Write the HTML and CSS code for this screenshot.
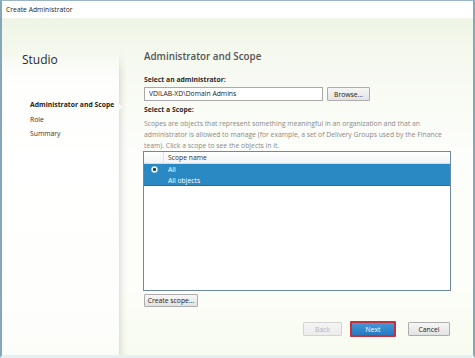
FILE: index.html
```html
<!DOCTYPE html>
<html lang="en">
<head>
    <meta charset="UTF-8">
    <meta name="viewport" content="width=device-width, initial-scale=1.0">
    <title>Create Administrator</title>
    <link rel="stylesheet" href="styles.css">
</head>
<body>
    <div class="window">
        <div class="titlebar">Create Administrator</div>

        <div class="window-body">
            <aside class="sidebar">
                <div class="studio">Studio</div>
                <ul class="steps">
                    <li class="active">Administrator and Scope</li>
                    <li>Role</li>
                    <li>Summary</li>
                </ul>
            </aside>
            <div class="divider"><span class="pointer"></span></div>

            <main class="page">
                <h1>Administrator and Scope</h1>

                <div class="field-label">Select an administrator:</div>
                <div class="admin-row">
                    <div class="textbox">VDILAB-XD\Domain Admins</div>
                    <button class="btn browse">Browse...</button>
                </div>

                <div class="field-label">Select a Scope:</div>
                <p class="desc">Scopes are objects that represent something meaningful in an organization and that an administrator is allowed to manage (for example, a set of Delivery Groups used by the Finance team). Click a scope to see the objects in it.</p>

                <div class="scope-table">
                    <div class="scope-head">
                        <div class="col-radio"></div>
                        <div class="col-name">Scope name</div>
                    </div>
                    <div class="scope-row selected">
                        <div class="col-radio"><span class="radio"></span></div>
                        <div class="col-name">
                            <div>All</div>
                            <div>All objects</div>
                        </div>
                    </div>
                </div>

                <button class="btn create">Create scope...</button>

                <div class="footer">
                    <button class="btn back" disabled>Back</button>
                    <button class="btn primary">Next</button>
                    <button class="btn cancel">Cancel</button>
                </div>
            </main>
        </div>
    </div>
</body>
</html>
```

FILE: styles.css
```css
* {
    box-sizing: border-box;
}
body {
    margin: 0;
    font-family: 'Open Sans', 'Noto Sans', sans-serif;
    color: #222;
    background-color: #fff;
}
.window {
    width: 475px;
    height: 358px;
    border-left: 2px solid #86a6ba;
    border-right: 2px solid #86a6ba;
    border-top: 1px solid #9bb5c6;
    border-bottom: 3px solid #e4f0f4;
    display: flex;
    flex-direction: column;
    overflow: hidden;
}
.titlebar {
    height: 17px;
    line-height: 17px;
    padding-left: 4px;
    font-size: 6.8px;
    color: #1e1e1e;
    background-color: #fff;
}
.window-body {
    flex: 1;
    display: flex;
    background: linear-gradient(to bottom, #eef5e5 0, #f6f9f0 45px, #fdfefb 140px, #fdfefa 260px, #f7fbef 100%);
}
.sidebar {
    width: 117px;
    padding: 33px 0 0 20px;
    background: linear-gradient(to bottom, rgba(255, 255, 255, 0) 0, rgba(255, 255, 255, 0) 36px, rgba(255, 255, 255, 0.8) 60px, rgba(255, 255, 255, 0.6) 100%);
}
.studio {
    font-size: 12px;
    line-height: 18px;
    color: #2a2a2a;
}
.steps {
    list-style: none;
    margin: 29px 0 0 8px;
    padding: 0;
}
.steps li {
    font-size: 6.8px;
    line-height: 14.5px;
    color: #333;
    white-space: nowrap;
}
.steps li.active {
    font-weight: 700;
    color: #222;
}
.divider {
    width: 8px;
    margin-top: 34px;
    position: relative;
    background: linear-gradient(to right, rgba(0, 0, 0, 0.1), rgba(0, 0, 0, 0.04) 45%, rgba(0, 0, 0, 0));
    -webkit-mask-image: linear-gradient(to bottom, transparent 0, #000 22px);
    mask-image: linear-gradient(to bottom, transparent 0, #000 22px);
}
.pointer {
    position: absolute;
    left: 0;
    top: 52px;
    border-style: solid;
    border-width: 3px 0 3px 3px;
    border-color: transparent transparent transparent #fff;
}
.page {
    flex: 1;
    padding: 33px 22px 0 17px;
    display: flex;
    flex-direction: column;
}
h1 {
    margin: 0;
    font-size: 9.8px;
    line-height: 12px;
    font-weight: 600;
    color: #555;
}
.field-label {
    font-size: 6.8px;
    line-height: 11px;
    font-weight: 700;
    color: #2a2a2a;
}
.page h1 + .field-label {
    margin-top: 11px;
}
.admin-row {
    display: flex;
    gap: 4px;
    margin: 2px 0 3px 0;
}
.textbox {
    width: 179px;
    height: 14px;
    line-height: 12px;
    padding-left: 4px;
    font-size: 6.8px;
    color: #222;
    background-color: #fff;
    border: 1px solid #a9a9a9;
}
.btn {
    font-family: 'Open Sans', 'Noto Sans', sans-serif;
    font-size: 6.8px;
    height: 14px;
    padding: 0;
    color: #222;
    border: 1px solid #adadad;
    border-radius: 1px;
    background: linear-gradient(to bottom, #f6f6f6, #e3e3e3);
}
.browse {
    width: 43px;
}
.desc {
    margin: 3px 0 0 0;
    font-size: 6.8px;
    line-height: 11px;
    color: #8a8a8a;
}
.scope-table {
    height: 140px;
    margin-left: -1px;
    border: 1px solid #6e8aa0;
    background-color: #fff;
}
.scope-head, .scope-row {
    display: flex;
}
.scope-head {
    height: 12px;
    line-height: 11px;
    font-size: 6.8px;
    color: #333;
    background: linear-gradient(to bottom, #fff, #f1f3f5);
    border-bottom: 1px solid #d5dde4;
}
.scope-head .col-radio {
    border-right: 1px solid #dde3e8;
}
.col-radio {
    width: 20px;
    display: flex;
    justify-content: center;
}
.col-name {
    padding-left: 4px;
}
.scope-row.selected {
    height: 22px;
    background-color: #2a88c2;
    color: #fff;
    font-size: 6.8px;
    line-height: 11px;
    border-bottom: 1px solid #226f9f;
}
.radio {
    width: 7px;
    height: 7px;
    margin-top: 2px;
    border-radius: 50%;
    background: radial-gradient(circle, #1e3f57 0, #1e3f57 1.3px, #fff 1.8px);
    border: 1px solid #d6e4ee;
}
.create {
    align-self: flex-start;
    width: 54px;
    height: 13px;
    margin-top: 3px;
}
.footer {
    display: flex;
    justify-content: flex-end;
    align-items: center;
    margin-top: 14px;
    margin-right: 1px;
}
.back {
    width: 39px;
    color: #b4b4b4;
    border-color: #d3d3d3;
    background: linear-gradient(to bottom, #f4f4f4, #ececec);
}
.primary {
    width: 46px;
    height: 16px;
    margin-left: 8px;
    color: #fff;
    border: 2px solid #c4313f;
    background: linear-gradient(to bottom, #4598d6, #2878bf);
}
.cancel {
    width: 42px;
    margin-left: 12px;
}
```
